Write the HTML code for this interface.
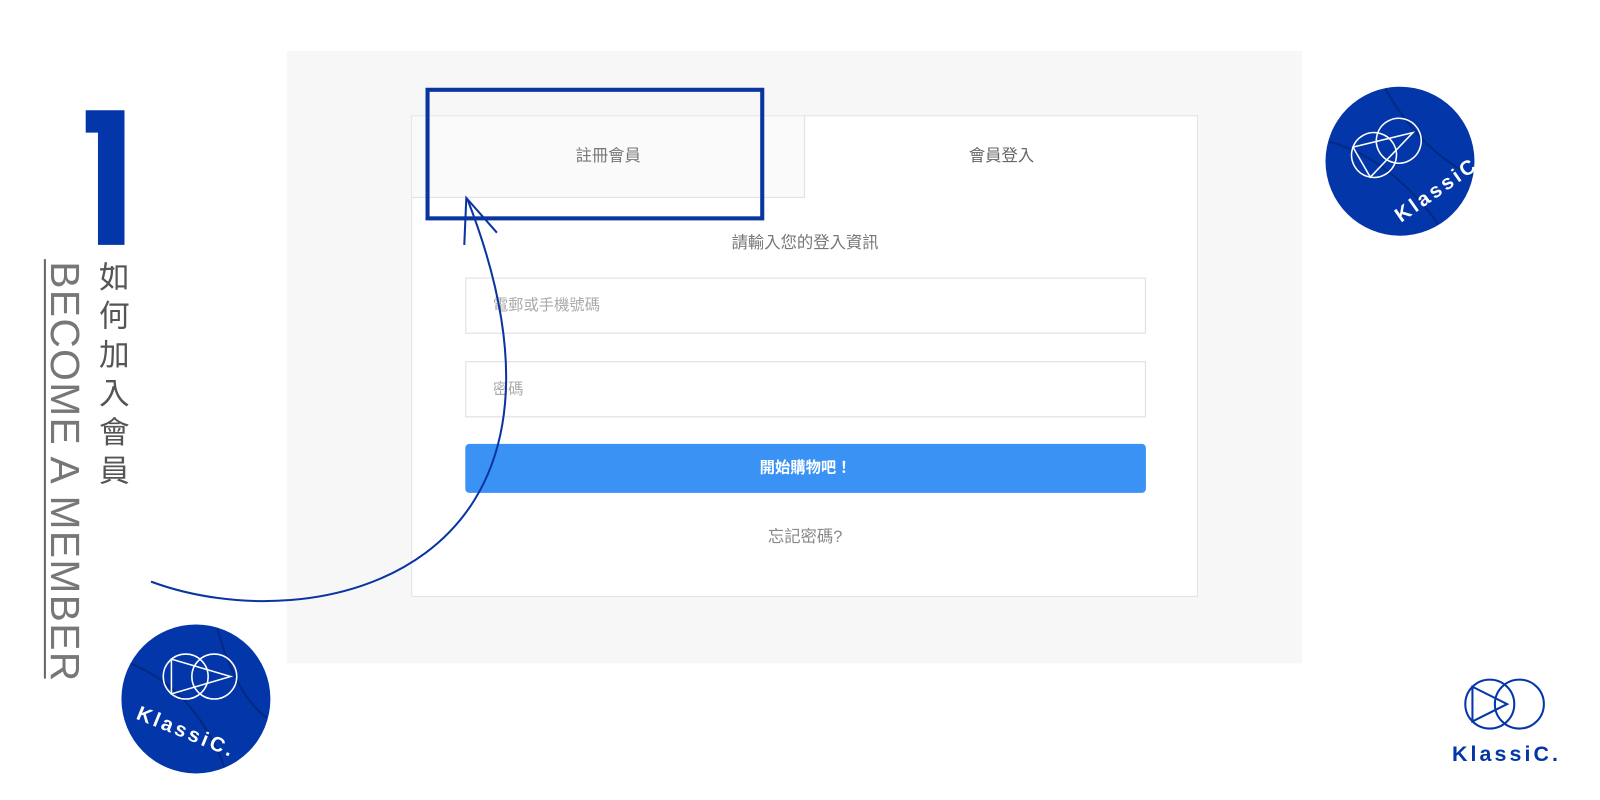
<!DOCTYPE html>
<html><head><meta charset="utf-8"><style>
*{margin:0;padding:0;box-sizing:border-box}
body{width:1600px;height:800px;background:#fff;position:relative;overflow:hidden;font-family:"Liberation Sans","Noto Sans CJK TC",sans-serif}
#w{position:absolute;left:0;top:0;width:1568px;height:784px;transform-origin:0 0;transform:scale(1.0204)}
.abs{position:absolute}
.panel{left:281px;top:50px;width:995px;height:600px;background:#f7f7f7}
.card{left:403px;top:113px;width:771px;height:472px;background:#fff;border:1px solid #e2e2e2}
.tab1{left:0;top:0;width:385px;height:80px;background:#fafafa;border-right:1px solid #e0e0e0;border-bottom:1px solid #e0e0e0;text-align:center;line-height:80px;color:#777;font-size:16px}
.tab2{left:385px;top:0;width:385px;height:80px;text-align:center;line-height:80px;color:#666;font-size:16px}
.inp{left:52px;width:667px;height:55px;border:1px solid #ddd;background:#fff;color:#aaa;font-size:15px;line-height:53px;padding-left:26px}
.btn{left:52px;top:321px;width:667px;height:48px;background:#3a92f5;border-radius:4px;color:#fff;font-weight:bold;font-size:15px;text-align:center;line-height:48px}
</style></head><body><div id="w">
<div class="abs panel"></div>
<div class="abs card">
 <div class="abs tab1">註冊會員</div>
 <div class="abs tab2">會員登入</div>
 <div class="abs" style="left:0;width:770px;top:110px;text-align:center;color:#777;font-size:16px">請輸入您的登入資訊</div>
 <div class="abs inp" style="top:158px">電郵或手機號碼</div>
 <div class="abs inp" style="top:240px">密碼</div>
 <div class="abs btn">開始購物吧！</div>
 <div class="abs" style="left:0;width:770px;top:398px;text-align:center;color:#888;font-size:16px">忘記密碼?</div>
</div>
<div class="abs" style="left:417px;top:86px;width:332px;height:130px;border:4px solid #0a35a0"></div>
<svg class="abs" style="left:0;top:0" width="1568" height="784">
 <defs><clipPath id="c"><circle r="72"/></clipPath></defs>
 <path d="M148 570 C 310 630, 600 560, 458 195" fill="none" stroke="#0a35a0" stroke-width="2"/>
 <path d="M455 240 L457 194 L487 228" fill="none" stroke="#0a35a0" stroke-width="2"/>
 <polygon points="84,108 122,108 122,240 96,240 96,130 84,130" fill="#0336a8"/>
 <line x1="44" y1="254" x2="44" y2="665" stroke="#666" stroke-width="2"/>
 <g transform="translate(1372,158)">
  <circle r="73" fill="#0336a8"/>
  <path clip-path="url(#c)" d="M-73 -20 Q-10 -5 40 65 M-15 -72 Q20 -10 72 15" stroke="#022a85" stroke-width="2" fill="none"/>
  <g transform="rotate(-30) translate(-5,-18)" fill="none" stroke="#fff" stroke-width="1.5">
   <circle cx="-14" r="22"/><circle cx="14" r="22"/>
   <path d="M-28 -17 L-28 17 L30 0 Z"/>
  </g>
  <text transform="rotate(-35) translate(-34,50)" fill="#fff" font-size="20" font-weight="bold" letter-spacing="3">KlassiC.</text>
 </g>
 <g transform="translate(192,685)">
  <circle r="73" fill="#0336a8"/>
  <path clip-path="url(#c)" d="M-65 -35 Q0 -10 30 72 M20 -72 Q40 0 72 20" stroke="#022a85" stroke-width="2" fill="none"/>
  <g transform="translate(4,-22)" fill="none" stroke="#fff" stroke-width="1.5">
   <circle cx="-14" r="22"/><circle cx="14" r="22"/>
   <path d="M-28 -17 L-28 17 L30 0 Z"/>
  </g>
  <text transform="rotate(22) translate(-48,40)" fill="#fff" font-size="20" font-weight="bold" letter-spacing="3">KlassiC.</text>
 </g>
 <g transform="translate(1473,690)" fill="none" stroke="#0336a8" stroke-width="2">
  <circle cx="-13" r="24"/><circle cx="16" r="24"/>
  <path d="M-30 -17 L-30 17 L4 0 Z"/>
 </g>
 <text x="1423" y="746" fill="#0336a8" font-size="21" font-weight="bold" letter-spacing="3">KlassiC.</text>
</svg>
<div class="abs" style="left:92px;top:254px;width:40px;font-size:30px;line-height:38px;color:#555;text-align:center">如<br>何<br>加<br>入<br>會<br>員</div>
<div class="abs" style="left:83px;top:256px;transform-origin:0 0;transform:rotate(90deg);font-size:40px;color:#777;white-space:nowrap;line-height:40px;letter-spacing:1.3px">BECOME A MEMBER</div>
</div></body></html>
